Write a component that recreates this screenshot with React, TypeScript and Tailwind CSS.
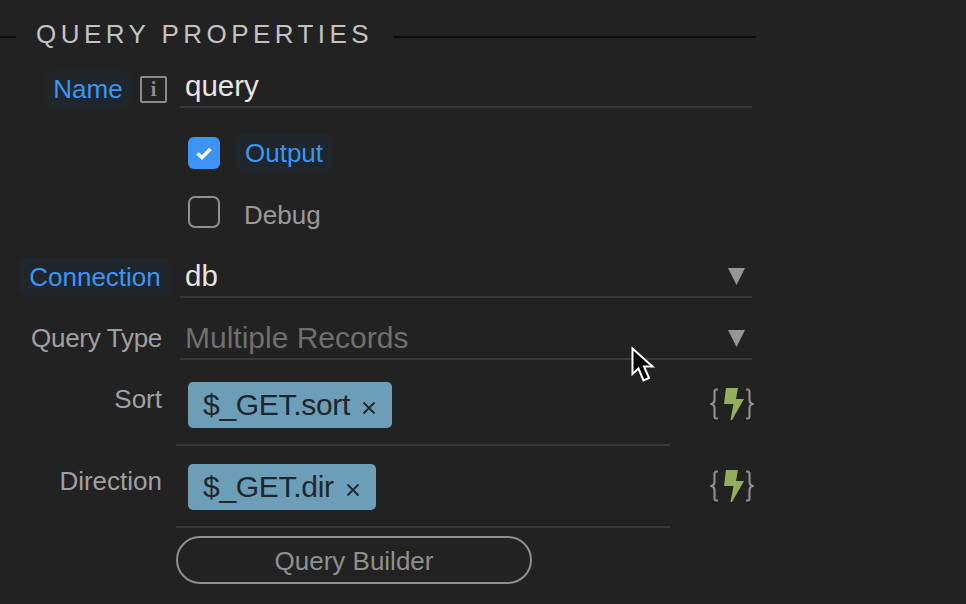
const Caret = () => (
  <svg width="18" height="17" viewBox="0 0 18 17" className="absolute right-[6px] top-[10px]">
    <polygon points="0,0 17,0 8.5,17" fill="#969696" />
  </svg>
);

const Dynamic = () => (
  <svg width="44" height="34" viewBox="0 0 44 34" fill="none">
    <path d="M8 2.5H6.5Q4.5 2.5 4.5 5V13Q4.5 16 1.5 17Q4.5 18 4.5 21V29Q4.5 31.5 6.5 31.5H8" stroke="#8d8d8d" strokeWidth="2.2" />
    <path d="M36 2.5H37.5Q39.5 2.5 39.5 5V13Q39.5 16 42.5 17Q39.5 18 39.5 21V29Q39.5 31.5 37.5 31.5H36" stroke="#8d8d8d" strokeWidth="2.2" />
    <polygon points="16,1 28,1 26,12 34,12 22,33 20.5,33 23.5,17 14,17" fill="#93ae5d" />
  </svg>
);

const Chip = ({ label }: { label: string }) => (
  <div className="ml-[12px] flex h-[46px] w-fit items-center rounded-[5px] bg-[#6c9fb7] pl-[15px] pr-[16px] text-[#20262b]">
    <span className="text-[30px] leading-none tracking-[-0.3px]">{label}</span>
    <svg width="14" height="14" viewBox="0 0 14 14" className="ml-[12px] mt-[5px]">
      <path d="M1.5 1.5L12.5 12.5M12.5 1.5L1.5 12.5" stroke="#20262b" strokeWidth="1.8" />
    </svg>
  </div>
);

const App = () => {
  return (
    <div className="relative h-[604px] w-[966px] overflow-hidden bg-[#222222] font-['Liberation_Sans',Arial,sans-serif] text-[26px]">
      <div className="mt-[17px] flex h-[34px] w-[756px] items-center pt-[6px]">
        <div className="h-[2px] w-[16px] bg-[#0c0c0c]" />
        <span className="relative -top-[3px] ml-[20px] whitespace-nowrap text-[26px] tracking-[4.45px] text-[#c2c2c2]">QUERY PROPERTIES</span>
        <div className="ml-[21px] h-[2px] flex-1 bg-[#0c0c0c]" />
      </div>

      <div className="mt-[19px] flex h-[38px] w-[752px]">
        <div className="flex w-[180px] items-center justify-end gap-[10px] pr-[13px]">
          <span className="flex h-[37px] w-[84px] items-center justify-center rounded-[7px] bg-[#1f262c] text-[#3b95f5]">Name</span>
          <span className="flex h-[27px] w-[27px] items-center justify-center rounded-[2px] border-2 border-[#8a8a8a] font-['Liberation_Serif',serif] text-[20px] font-bold leading-none text-[#8f8f8f]">i</span>
        </div>
        <div className="flex-1 border-b-2 border-[#393939] pl-[5px] text-[29.5px] leading-[32px] text-[#e6e6e6]">query</div>
      </div>

      <div className="ml-[188px] mt-[26px] flex h-[38px] items-center">
        <span className="flex h-[32px] w-[32px] items-center justify-center rounded-[6px] bg-[#3b95f5]">
          <svg width="16" height="13" viewBox="0 0 16 13" fill="none">
            <path d="M1.5 6.5L6 10.5L14.5 2" stroke="#fff" strokeWidth="3.6" />
          </svg>
        </span>
        <span className="ml-[16px] flex h-[38px] w-[96px] items-center justify-center rounded-[7px] bg-[#1f262c] text-[#3b95f5]">Output</span>
      </div>

      <div className="ml-[188px] mt-[24px] flex h-[32px] items-center">
        <span className="h-[32px] w-[32px] rounded-[7px] border-2 border-[#8f8f8f]" />
        <span className="relative top-[3px] ml-[24px] text-[#9a9a9a]">Debug</span>
      </div>

      <div className="mt-[30px] flex h-[40px] w-[752px]">
        <div className="flex w-[180px] justify-end pr-[10px]">
          <span className="flex h-[38px] w-[150px] items-center justify-center rounded-[7px] bg-[#1f262c] text-[#3b95f5]">Connection</span>
        </div>
        <div className="relative flex-1 border-b-2 border-[#393939] pl-[5px] text-[29.5px] leading-[36px] text-[#e6e6e6]">
          db
          <Caret />
        </div>
      </div>

      <div className="mt-[22px] flex h-[40px] w-[752px]">
        <div className="w-[162px] pt-[2px] text-right leading-[32px] tracking-[-0.3px] text-[#a0a0a0]">Query Type</div>
        <div className="relative ml-[18px] flex-1 border-b-2 border-[#393939] pl-[5px] text-[30px] leading-[36px] text-[#6f6f6f]">
          Multiple Records
          <Caret />
        </div>
      </div>

      <div className="mt-[22px] flex h-[64px] w-[754px]">
        <div className="w-[162px] pt-[2px] text-right leading-[30px] text-[#a0a0a0]">Sort</div>
        <div className="ml-[14px] h-[64px] w-[494px] border-b-2 border-[#393939]">
          <Chip label="$_GET.sort" />
        </div>
        <div className="ml-auto mt-[5px]"><Dynamic /></div>
      </div>

      <div className="mt-[18px] flex h-[64px] w-[754px]">
        <div className="w-[162px] pt-[2px] text-right leading-[30px] text-[#a0a0a0]">Direction</div>
        <div className="ml-[14px] h-[64px] w-[494px] border-b-2 border-[#393939]">
          <Chip label="$_GET.dir" />
        </div>
        <div className="ml-auto mt-[5px]"><Dynamic /></div>
      </div>

      <button className="ml-[176px] mt-[8px] flex h-[48px] w-[356px] items-center justify-center rounded-full border-2 border-[#8f8f8f] pt-[2px] text-[26px] text-[#8f8f8f]">
        Query Builder
      </button>

      <svg width="26" height="38" viewBox="0 0 26 38" className="absolute left-[630px] top-[346px]">
        <path d="M2.5 2.5V28L8.5 22.5L13.5 34.5L19 32L14 20.5H22.5Z" fill="#000" stroke="#fff" strokeWidth="2" />
      </svg>
    </div>
  );
};

export default App;
